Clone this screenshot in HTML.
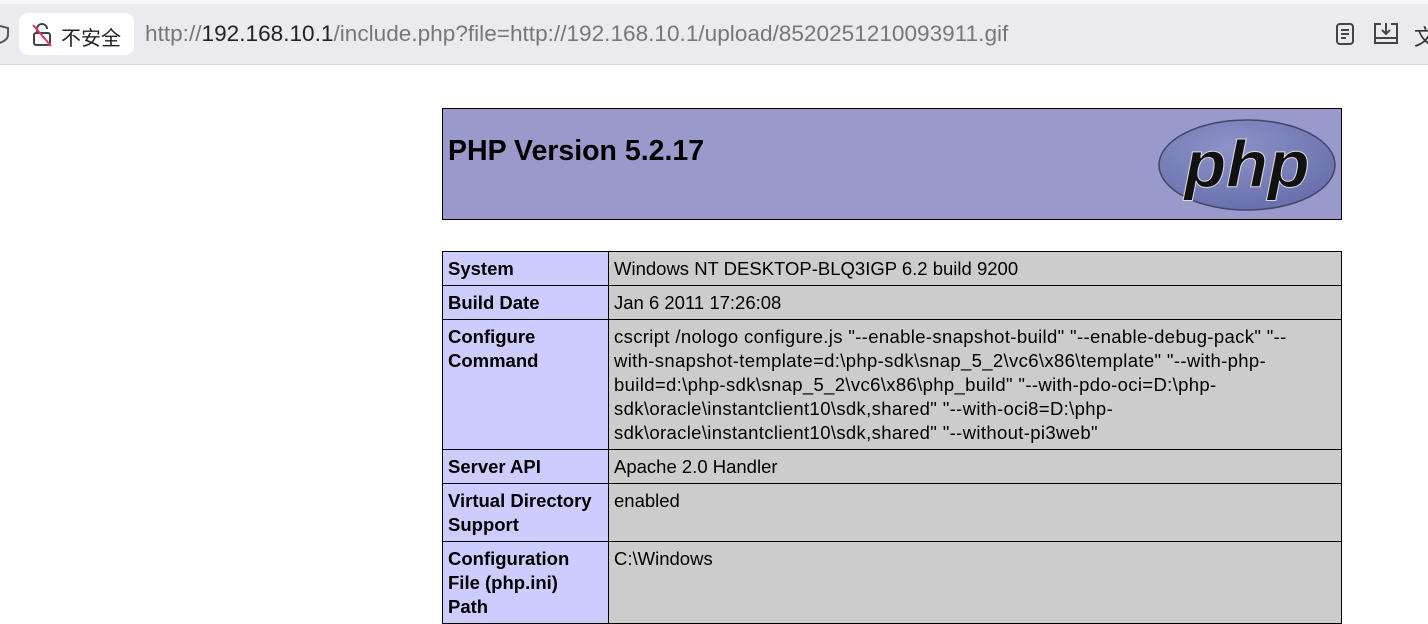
<!DOCTYPE html>
<html><head><meta charset="utf-8"><style>
body{margin:0;width:1428px;height:595px;overflow:hidden;background:#fff;font-family:"Liberation Sans","Noto Sans CJK SC",sans-serif;position:relative}
.top{position:absolute;left:0;top:0;width:1428px;height:64px;background:#ebebef;border-bottom:1px solid #d6d6d6}
.top:before{content:"";position:absolute;left:0;top:0;width:1428px;height:4px;background:#f7f7f7}
.sec{position:absolute;left:19px;top:13px;width:115px;height:42px;background:#fff;border-radius:9px}
.sec span{position:absolute;left:42px;top:9px;font-size:20px;color:#222}
.url{position:absolute;left:145px;top:21px;font-size:22.6px;color:#777;white-space:nowrap}
.url b{font-weight:normal;color:#222}
.hdr{position:absolute;left:442px;top:108px;width:898px;height:110px;background:#9999cc;border:1px solid #000}
.hdr h1{position:absolute;left:5px;top:26px;margin:0;font-size:28.5px;font-weight:bold}
table{position:absolute;left:442px;top:251px;border-collapse:collapse;width:900px;font-size:18.5px;line-height:24px}
td{border:1px solid #000;vertical-align:top;padding:5px 5px 4px 5px}
td.e{background:#ccccff;font-weight:bold;width:155px}
td.v{background:#cccccc}
.w{letter-spacing:0.35px}
</style></head><body>
<div class="top">
<svg style="position:absolute;left:0;top:22px" width="12" height="24"><path d="M-4 3 L8 6 L8 13 Q8 19 -4 22" fill="none" stroke="#555" stroke-width="2"/></svg>
<div class="sec"><svg style="position:absolute;left:12px;top:9px" width="24" height="26"><rect x="3" y="11" width="16" height="12" rx="2" fill="none" stroke="#444" stroke-width="2"/><path d="M6 11V7a5 5 0 0 1 10 0" fill="none" stroke="#444" stroke-width="2"/><path d="M2 3 L20 24" stroke="#e8345a" stroke-width="2"/></svg><span>不安全</span></div>
<div class="url">http://<b>192.168.10.1</b>/include.php?file=http://192.168.10.1/upload/8520251210093911.gif</div>
<svg style="position:absolute;left:1334px;top:22px" width="24" height="24"><rect x="3" y="2" width="16" height="20" rx="3" fill="none" stroke="#444" stroke-width="2"/><path d="M7 8h8M7 12h8M7 16h5" stroke="#444" stroke-width="2"/></svg>
<svg style="position:absolute;left:1372px;top:20px" width="28" height="26"><path d="M9 4H3v19h22V4h-6" fill="none" stroke="#444" stroke-width="2"/><path d="M14 3v11M10 10l4 4 4-4M3 18h22" fill="none" stroke="#444" stroke-width="2"/></svg>
<div style="position:absolute;left:1414px;top:20px;font-size:22px;color:#333">文</div>
</div>
<div class="hdr"><h1>PHP Version 5.2.17</h1>
<svg style="position:absolute;left:714px;top:8px" width="180" height="95"><defs><radialGradient id="g" cx="40%" cy="30%" r="70%"><stop offset="0" stop-color="#8d93c7"/><stop offset="1" stop-color="#6a70ad"/></radialGradient></defs><ellipse cx="90" cy="48" rx="88" ry="45" fill="url(#g)" stroke="#444466" stroke-width="1.5"/><text x="90" y="70" text-anchor="middle" font-family="Liberation Sans,sans-serif" font-style="italic" font-weight="bold" font-size="66" fill="#111" stroke="#ddd" stroke-width="1" textLength="125" lengthAdjust="spacingAndGlyphs">php</text></svg>
</div>
<table>
<tr><td class="e">System</td><td class="v">Windows NT DESKTOP-BLQ3IGP 6.2 build 9200</td></tr>
<tr><td class="e">Build Date</td><td class="v">Jan 6 2011 17:26:08</td></tr>
<tr><td class="e">Configure Command</td><td class="v w">cscript /nologo configure.js "--enable-snapshot-build" "--enable-debug-pack" "--<br>with-snapshot-template=d:\php-sdk\snap_5_2\vc6\x86\template" "--with-php-<br>build=d:\php-sdk\snap_5_2\vc6\x86\php_build" "--with-pdo-oci=D:\php-<br>sdk\oracle\instantclient10\sdk,shared" "--with-oci8=D:\php-<br>sdk\oracle\instantclient10\sdk,shared" "--without-pi3web"</td></tr>
<tr><td class="e">Server API</td><td class="v">Apache 2.0 Handler</td></tr>
<tr><td class="e">Virtual Directory Support</td><td class="v">enabled</td></tr>
<tr><td class="e">Configuration File (php.ini) Path</td><td class="v">C:\Windows</td></tr>
</table>
</body></html>
